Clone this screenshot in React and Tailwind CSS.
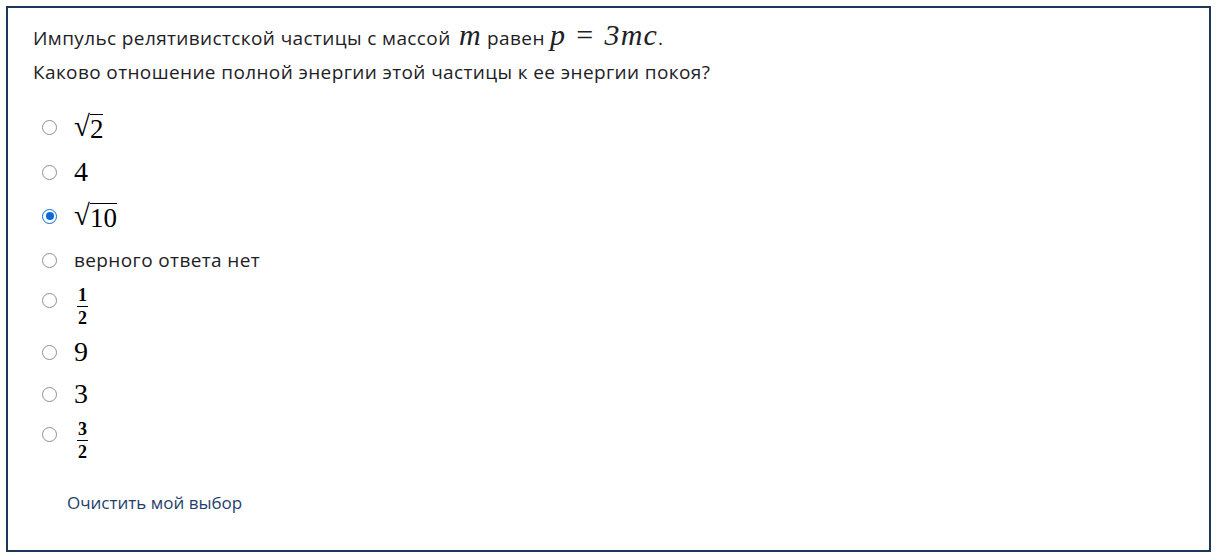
const sans = { fontFamily: '"Open Sans", "Noto Sans", sans-serif' }
const serif = { fontFamily: '"Liberation Serif", "DejaVu Serif", serif' }

function Sqrt({ children }) {
  return (
    <span className="inline-flex items-start leading-none" style={serif}>
      <span className="text-[29px] leading-none mt-[1px]">√</span>
      <span className="border-t-[1.5px] border-black pt-[1px] text-[27px] leading-none mt-[3px]">
        {children}
      </span>
    </span>
  )
}

function Frac({ top, bottom }) {
  return (
    <span className="inline-flex flex-col items-center leading-none ml-[3px] font-bold" style={serif}>
      <span className="text-[18px] px-[1px]">{top}</span>
      <span className="w-full border-t-[1.2px] border-black my-[2px]" />
      <span className="text-[18px] px-[1px]">{bottom}</span>
    </span>
  )
}

function Num({ children }) {
  return (
    <span className="text-[28px] leading-none" style={serif}>
      {children}
    </span>
  )
}

const options = [
  { h: 'h-[46px]', content: <Sqrt>2</Sqrt> },
  { h: 'h-[44px]', content: <Num>4</Num> },
  { h: 'h-[44px]', content: <Sqrt>10</Sqrt>, checked: true },
  { h: 'h-[44px]', content: <span className="text-[19px] tracking-[0.02em] text-[#1d2125]" style={sans}>верного ответа нет</span> },
  { h: 'h-[48px]', content: <Frac top="1" bottom="2" />, frac: true },
  { h: 'h-[44px]', content: <Num>9</Num> },
  { h: 'h-[40px]', content: <Num>3</Num> },
  { h: 'h-[52px]', content: <Frac top="3" bottom="2" />, frac: true },
]

function Radio({ checked, frac }) {
  return (
    <span
      className={
        'w-[15px] h-[15px] rounded-full flex items-center justify-center shrink-0 ' +
        (checked ? 'border-[1.5px] border-[#0b6bd6]' : 'border border-[#8f8f8f]') +
        (frac ? ' mb-[12px]' : '')
      }
    >
      {checked && <span className="w-[8px] h-[8px] rounded-full bg-[#0b6bd6]" />}
    </span>
  )
}

function App() {
  return (
    <div className="min-h-screen bg-white pl-[6px] pt-[6px]">
      <div className="w-[1205px] h-[546px] border-2 border-[#1c3858] bg-white">
        <div className="pl-[25px] pt-[13px] text-[19px] leading-[27px] tracking-[0.02em] text-[#1d2125]" style={sans}>
          <p className="flex items-baseline h-[32px]">
            <span>Импульс релятивистской частицы с массой&nbsp;</span>
            <span className="italic text-[30px] tracking-[0.04em] ml-[3px]" style={serif}>m</span>
            <span>&nbsp;равен&nbsp;</span>
            <span className="italic text-[30px] tracking-[0.04em]" style={serif}>
              p<span className="not-italic mx-[10px]">=</span>3mc
            </span>
            <span>.</span>
          </p>
          <p className="mt-[6px]">Каково отношение полной энергии этой частицы к ее энергии покоя?</p>
        </div>

        <div className="mt-[18px] pl-[34px] flex flex-col">
          {options.map((o, i) => (
            <label key={i} className={'flex items-center gap-[17px] ' + o.h}>
              <Radio checked={o.checked} frac={o.frac} />
              {o.content}
            </label>
          ))}
        </div>

        <div className="mt-[24px] pl-[59px]">
          <a className="text-[17px] text-[#1f3f6b]" style={sans}>Очистить мой выбор</a>
        </div>
      </div>
    </div>
  )
}

export default App
